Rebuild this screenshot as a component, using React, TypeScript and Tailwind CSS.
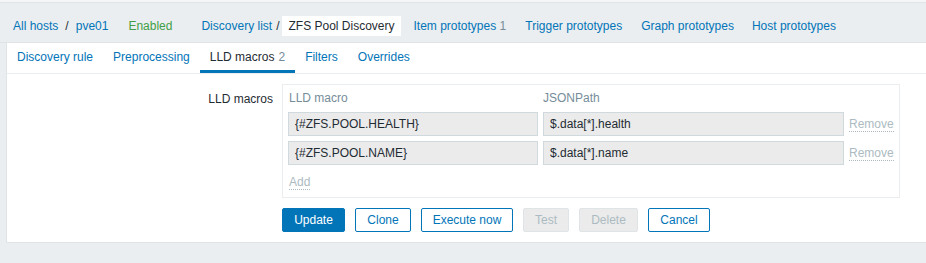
const navLink = "text-[#0275b8] whitespace-nowrap";

function Tab({ label, count, active }: { label: string; count?: number; active?: boolean }) {
  return (
    <div
      className={
        "h-[30px] px-[10px] flex items-center whitespace-nowrap border-b-[3px] " +
        (active ? "border-[#0275b8] text-[#1f2c33]" : "border-transparent text-[#0275b8]")
      }
    >
      <span className="pt-px">
        {label}
        {count !== undefined && <span className="text-[#768d99] ml-[4px]">{count}</span>}
      </span>
    </div>
  );
}

function MacroRow({ macro, path }: { macro: string; path: string }) {
  return (
    <div className="flex items-center h-[24px]">
      <div className="w-[250px] h-[24px] bg-[#ebebeb] border border-[#d0d9de] px-[6px] flex items-center text-[#1f2c33]">
        {macro}
      </div>
      <div className="w-[301px] h-[24px] ml-[5px] bg-[#ebebeb] border border-[#d0d9de] px-[6px] flex items-center text-[#1f2c33]">
        {path}
      </div>
      <span className="ml-[5px] mt-px text-[#acbbc2] border-b border-dotted border-[#acbbc2] leading-[13px]">Remove</span>
    </div>
  );
}

function Btn({ label, w, kind }: { label: string; w: number; kind: "primary" | "outline" | "disabled" }) {
  const cls =
    kind === "primary"
      ? "bg-[#0275b8] border-[#0275b8] text-white"
      : kind === "outline"
      ? "bg-white border-[#0275b8] text-[#0275b8]"
      : "bg-[#ebebeb] border-[#dfe4e7] text-[#acbbc2]";
  return (
    <div
      className={"h-[24px] border rounded-[2px] flex items-center justify-center " + cls}
      style={{ width: w }}
    >
      {label}
    </div>
  );
}

export default function App() {
  return (
    <div className="min-h-screen bg-[#ebeef0] text-[12px] text-[#1f2c33]" style={{ fontFamily: "'Liberation Sans', Arial, sans-serif" }}>
      <div className="h-[2px] bg-[#f4f6f7]" />
      {/* host navigation */}
      <div className="h-[41px] border-t border-b border-[#dfe4e7] flex items-center pl-[13px] pt-[6px]">
        <span className={navLink}>All hosts</span>
        <span className="mx-[7px] text-[#1f2c33]">/</span>
        <span className={navLink}>pve01</span>
        <span className="ml-[20px] text-[#429e47]">Enabled</span>
        <span className={navLink + " ml-[29px]"}>Discovery list</span>
        <span className="ml-[4px] mr-[3px] text-[#1f2c33]">/</span>
        <span className="bg-white h-[20px] px-[6px] flex items-center text-[#1f2c33]">ZFS Pool Discovery</span>
        <span className={navLink + " ml-[13px]"}>
          Item prototypes <span className="text-[#768d99]">1</span>
        </span>
        <span className={navLink + " ml-[19px]"}>Trigger prototypes</span>
        <span className={navLink + " ml-[19px]"}>Graph prototypes</span>
        <span className={navLink + " ml-[18px]"}>Host prototypes</span>
      </div>

      {/* panel */}
      <div className="ml-[6px] bg-white border-l border-b border-[#dfe4e7]">
        <div className="flex border-b border-[#ebeef0]">
          <Tab label="Discovery rule" />
          <Tab label="Preprocessing" />
          <Tab label="LLD macros" count={2} active />
          <Tab label="Filters" />
          <Tab label="Overrides" />
        </div>

        <div className="flex pt-[10px]">
          <div className="w-[275px] pr-[9px] text-right pt-[6px]">LLD macros</div>
          <div className="w-[618px] h-[114px] border border-[#ebeef0] px-[5px]">
            <div className="flex h-[24px] pt-px items-center text-[#768d99]">
              <span className="w-[255px] pl-px">LLD macro</span>
              <span>JSONPath</span>
            </div>
            <div className="flex flex-col gap-[5px] pt-[3px]">
              <MacroRow macro="{#ZFS.POOL.HEALTH}" path="$.data[*].health" />
              <MacroRow macro="{#ZFS.POOL.NAME}" path="$.data[*].name" />
            </div>
            <div className="pt-[8px] pl-px">
              <span className="text-[#acbbc2] border-b border-dotted border-[#acbbc2] leading-[13px]">Add</span>
            </div>
          </div>
        </div>

        <div className="flex gap-[10px] pl-[275px] pt-[10px] pb-[10px]">
          <Btn label="Update" w={63} kind="primary" />
          <Btn label="Clone" w={56} kind="outline" />
          <Btn label="Execute now" w={92} kind="outline" />
          <Btn label="Test" w={46} kind="disabled" />
          <Btn label="Delete" w={59} kind="disabled" />
          <Btn label="Cancel" w={62} kind="outline" />
        </div>
      </div>
    </div>
  );
}
